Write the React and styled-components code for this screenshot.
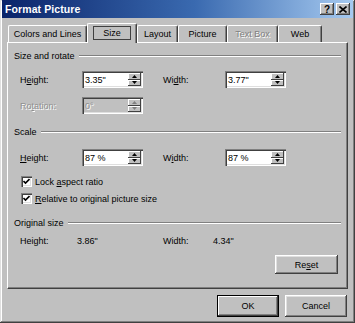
import React from "react";
import styled, { createGlobalStyle } from "styled-components";

const Global = createGlobalStyle`
  html, body { margin: 0; padding: 0; background: #c0c0c0; }
  body { font-family: "Liberation Sans", Arial, sans-serif; font-size: 9px; color: #000; }
  * { box-sizing: border-box; }
`;

const Window = styled.div`
  width: 355px;
  height: 323px;
  background: #c0c0c0;
  display: flex;
  flex-direction: column;
  padding: 0 2px 2px 2px;
  box-shadow: inset -1px -1px #404040, inset 1px 1px #dfdfdf, inset -2px -2px #808080, inset 2px 2px #ffffff;
`;

const TitleBar = styled.div`
  height: 18px;
  display: flex;
  align-items: center;
  padding: 0 3px 0 3px;
  background: linear-gradient(to right, #0a246a 0%, #3a6ab0 55%, #a6caf0 100%);
  color: #fff;
`;

const TitleText = styled.span`
  flex: 1;
  font-weight: bold;
  font-size: 10.5px;
  letter-spacing: 0.1px;
`;

const TitleButton = styled.div`
  width: 14px;
  height: 12px;
  margin-left: ${(p) => p.$ml || 0}px;
  background: #c0c0c0;
  color: #000;
  font-weight: bold;
  font-size: 10px;
  display: flex;
  align-items: center;
  justify-content: center;
  box-shadow: inset -1px -1px #404040, inset 1px 1px #ffffff, inset -2px -2px #808080;
`;

const Body = styled.div`
  flex: 1;
  display: flex;
  flex-direction: column;
  padding: 5px 4px 0 5px;
`;

const TabStrip = styled.div`
  height: 19px;
  display: flex;
  align-items: flex-end;
  padding-left: 1px;
  position: relative;
  z-index: 2;
`;

const Tab = styled.div`
  width: ${(p) => p.$w}px;
  height: ${(p) => (p.$active ? 20 : 17)}px;
  margin-bottom: ${(p) => (p.$active ? -1 : 0)}px;
  background: #c0c0c0;
  border-top: 1px solid #fff;
  border-left: 1px solid #fff;
  border-right: 1px solid #404040;
  box-shadow: inset -1px 0 #808080;
  border-radius: 2px 2px 0 0;
  display: flex;
  align-items: center;
  justify-content: center;
  padding-bottom: ${(p) => (p.$active ? 2 : 0)}px;
  color: ${(p) => (p.$disabled ? "#808080" : "#000")};
  text-shadow: ${(p) => (p.$disabled ? "1px 1px #fff" : "none")};
  white-space: nowrap;
`;

const FocusLabel = styled.span`
  border: 1px solid #404040;
  padding: 1px 9px;
  line-height: 10px;
`;

const Panel = styled.div`
  height: 247px;
  width: 341px;
  background: #c0c0c0;
  border: 1px solid;
  border-color: #fff #404040 #404040 #fff;
  box-shadow: inset -1px -1px #808080;
  display: flex;
  flex-direction: column;
  padding: 6px 6px 0 6px;
  position: relative;
  z-index: 1;
`;

const Header = styled.div`
  height: 14px;
  margin-top: ${(p) => p.$mt || 0}px;
  display: flex;
  align-items: center;
`;

const Rule = styled.div`
  flex: 1;
  margin-left: 4px;
  border-top: 1px solid #808080;
  border-bottom: 1px solid #fff;
`;

const FieldRow = styled.div`
  height: 17px;
  margin-top: ${(p) => p.$mt || 0}px;
  margin-left: 6px;
  display: grid;
  grid-template-columns: 62px 61px 20px 62px 61px;
  align-items: center;
`;

const Label = styled.span`
  color: ${(p) => (p.$disabled ? "#909090" : "#000")};
  text-shadow: ${(p) => (p.$disabled ? "1px 1px #fff" : "none")};
  white-space: nowrap;
`;

const SpinBox = styled.div`
  width: 61px;
  height: 17px;
  background: ${(p) => (p.$disabled ? "#c0c0c0" : "#fff")};
  box-shadow: inset 1px 1px #808080, inset 2px 2px #404040, inset -1px -1px #fff, inset -2px -2px #dfdfdf;
  display: flex;
  align-items: stretch;
  padding: 2px;
`;

const SpinText = styled.span`
  flex: 1;
  display: flex;
  align-items: center;
  padding-left: 1px;
  color: ${(p) => (p.$disabled ? "#909090" : "#000")};
  text-shadow: ${(p) => (p.$disabled ? "1px 1px #fff" : "none")};
`;

const SpinButtons = styled.div`
  width: 13px;
  display: flex;
  flex-direction: column;
`;

const SpinButton = styled.div`
  flex: 1;
  background: #c0c0c0;
  box-shadow: inset -1px -1px #404040, inset 1px 1px #fff;
  display: flex;
  align-items: center;
  justify-content: center;
`;

const CheckRow = styled.div`
  height: 13px;
  margin-top: ${(p) => p.$mt || 0}px;
  margin-left: 7px;
  display: flex;
  align-items: center;
  gap: 3px;
`;

const CheckBox = styled.div`
  width: 11px;
  height: 11px;
  background: #fff;
  box-shadow: inset 1px 1px #808080, inset 2px 2px #404040, inset -1px -1px #fff, inset -2px -2px #dfdfdf;
  display: flex;
  align-items: center;
  justify-content: center;
`;

const InfoRow = styled.div`
  height: 14px;
  margin-top: ${(p) => p.$mt || 0}px;
  margin-left: 6px;
  display: grid;
  grid-template-columns: 57px 86px 50px auto;
  align-items: center;
`;

const PushButton = styled.div`
  width: ${(p) => p.$w || 62}px;
  height: ${(p) => p.$h || 22}px;
  background: #c0c0c0;
  display: flex;
  align-items: center;
  justify-content: center;
  border: ${(p) => (p.$default ? "1px solid #000" : "none")};
  box-shadow: ${(p) =>
    p.$default
      ? "inset -1px -1px #404040, inset 1px 1px #fff, inset -2px -2px #808080"
      : "inset -1px -1px #404040, inset 1px 1px #fff, inset -2px -2px #808080, inset 2px 2px #dfdfdf"};
`;

const ResetWrap = styled.div`
  margin-top: 7px;
  align-self: flex-end;
  margin-right: 3px;
`;

const ButtonRow = styled.div`
  margin-top: 6px;
  display: flex;
  justify-content: flex-end;
  gap: 6px;
  padding-right: 2px;
`;

const Up = () => (
  <svg width="5" height="3" viewBox="0 0 5 3"><path d="M2.5 0 L5 3 L0 3 Z" fill="#000" /></svg>
);
const Down = () => (
  <svg width="5" height="3" viewBox="0 0 5 3"><path d="M0 0 L5 0 L2.5 3 Z" fill="#000" /></svg>
);
const UpDis = () => (
  <svg width="5" height="3" viewBox="0 0 5 3"><path d="M2.5 0 L5 3 L0 3 Z" fill="#808080" /></svg>
);
const DownDis = () => (
  <svg width="5" height="3" viewBox="0 0 5 3"><path d="M0 0 L5 0 L2.5 3 Z" fill="#808080" /></svg>
);

const Spin = ({ value, disabled }) => (
  <SpinBox $disabled={disabled}>
    <SpinText $disabled={disabled}>{value}</SpinText>
    <SpinButtons>
      <SpinButton>{disabled ? <UpDis /> : <Up />}</SpinButton>
      <SpinButton>{disabled ? <DownDis /> : <Down />}</SpinButton>
    </SpinButtons>
  </SpinBox>
);

const Check = () => (
  <CheckBox>
    <svg width="7" height="7" viewBox="0 0 7 7">
      <path d="M0.5 3 L2.5 5 L6.5 1" stroke="#000" strokeWidth="1.6" fill="none" />
    </svg>
  </CheckBox>
);

export default function App() {
  return (
    <>
      <Global />
      <Window>
        <TitleBar>
          <TitleText>Format Picture</TitleText>
          <TitleButton>?</TitleButton>
          <TitleButton $ml={2}>
            <svg width="8" height="7" viewBox="0 0 8 7">
              <path d="M0.5 0.5 L7.5 6.5 M7.5 0.5 L0.5 6.5" stroke="#000" strokeWidth="1.6" />
            </svg>
          </TitleButton>
        </TitleBar>
        <Body>
          <TabStrip>
            <Tab $w={79}>Colors and Lines</Tab>
            <Tab $w={50} $active><FocusLabel>Size</FocusLabel></Tab>
            <Tab $w={41}>Layout</Tab>
            <Tab $w={49}>Picture</Tab>
            <Tab $w={51} $disabled>Text Box</Tab>
            <Tab $w={44}>Web</Tab>
          </TabStrip>
          <Panel>
            <Header>Size and rotate<Rule /></Header>
            <FieldRow $mt={8}>
              <Label>H<u>e</u>ight:</Label>
              <Spin value={'3.35"'} />
              <span />
              <Label>Wi<u>d</u>th:</Label>
              <Spin value={'3.77"'} />
            </FieldRow>
            <FieldRow $mt={9}>
              <Label $disabled>Ro<u>t</u>ation:</Label>
              <Spin value="0°" disabled />
            </FieldRow>
            <Header $mt={11}>Scale<Rule /></Header>
            <FieldRow $mt={10}>
              <Label><u>H</u>eight:</Label>
              <Spin value="87 %" />
              <span />
              <Label>W<u>i</u>dth:</Label>
              <Spin value="87 %" />
            </FieldRow>
            <CheckRow $mt={9}>
              <Check />
              <Label>Lock <u>a</u>spect ratio</Label>
            </CheckRow>
            <CheckRow $mt={4}>
              <Check />
              <Label><u>R</u>elative to original picture size</Label>
            </CheckRow>
            <Header $mt={11}>Original size<Rule /></Header>
            <InfoRow $mt={4}>
              <Label>Height:</Label>
              <Label>3.86"</Label>
              <Label>Width:</Label>
              <Label>4.34"</Label>
            </InfoRow>
            <ResetWrap>
              <PushButton $w={63} $h={19}>Re<u>s</u>et</PushButton>
            </ResetWrap>
          </Panel>
          <ButtonRow>
            <PushButton $default>OK</PushButton>
            <PushButton>Cancel</PushButton>
          </ButtonRow>
        </Body>
      </Window>
    </>
  );
}
